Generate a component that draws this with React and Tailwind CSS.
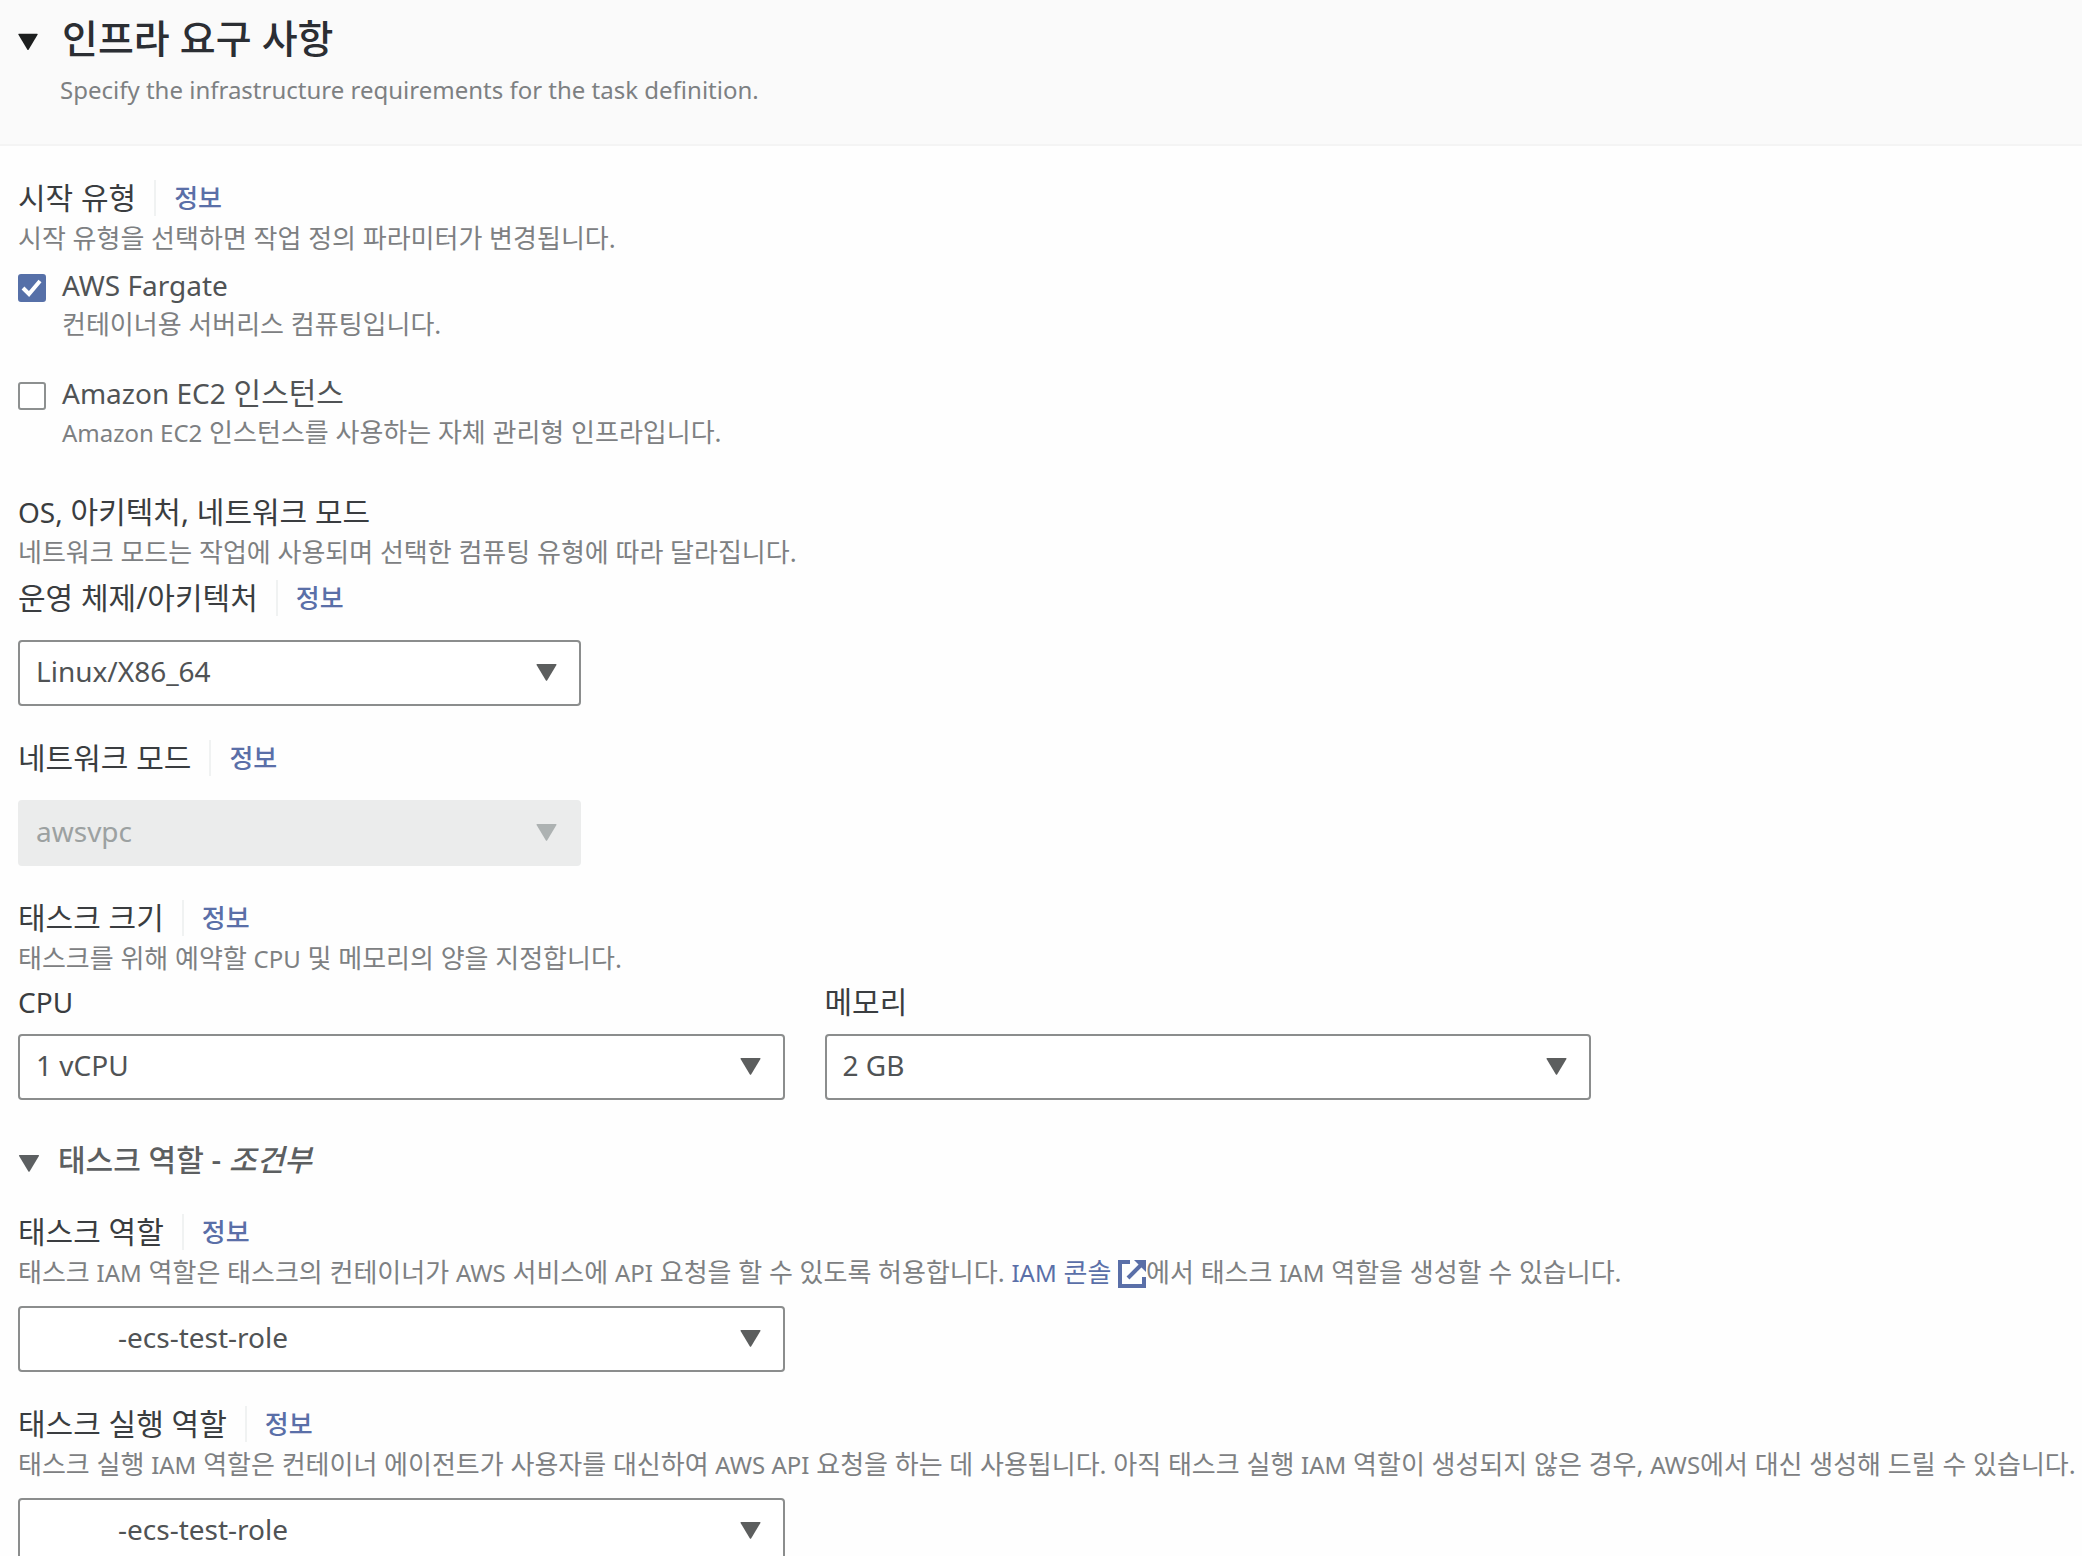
import React, { useId } from "react";

function Triangle({ className }) {
  return (
    <svg viewBox="0 0 22 18" className={className} fill="currentColor" aria-hidden="true">
      <path d="M1 0h20q1 0 .5 1L11.8 17.2q-.8 1.2-1.6 0L.5 1Q0 0 1 0Z" />
    </svg>
  );
}

function ExternalIcon() {
  return (
    <svg
      viewBox="0 0 28 28"
      className="inline-block h-7 w-7 align-[-6px]"
      fill="none"
      stroke="currentColor"
      strokeWidth="4"
      aria-hidden="true"
    >
      <path d="M12 2H2v24h24v-9" />
      <path d="M23 5 10 18" />
      <path d="M16 0h12v12Z" fill="currentColor" stroke="none" />
    </svg>
  );
}

/* Latin words inside Korean copy are set a little smaller than the Hangul. */
function En({ children }) {
  return <span className="text-[24px]">{children}</span>;
}

function EnLabel({ children }) {
  return <span className="text-[28px]">{children}</span>;
}

function Info() {
  return (
    <a href="#info" className="ml-[18px] border-l-2 border-[#f0f2f2] pl-[18px] text-[26px] font-medium leading-9 text-[#5a6fa8]">
      정보
    </a>
  );
}

function Label({ htmlFor, info, children }) {
  const Tag = htmlFor ? "label" : "h3";
  return (
    <div className="flex h-10 items-center text-[30px] leading-10 text-[#3a3d40]">
      <Tag htmlFor={htmlFor}>{children}</Tag>
      {info && <Info />}
    </div>
  );
}

function Desc({ children }) {
  return <p className="h-10 whitespace-nowrap text-[26px] leading-10 text-[#7d8082]">{children}</p>;
}

function Select({ id, value, disabled, className = "pl-4" }) {
  return (
    <div className={disabled ? "relative text-[#adb2b2]" : "relative text-[#5c5e5e]"}>
      <select
        id={id}
        disabled={disabled}
        className={
          (disabled
            ? "border-[#ebecec] bg-[#ebecec] text-[#9ca1a1] "
            : "border-[#8b8d8d] bg-white text-[#505355] ") +
          "block h-[66px] w-full appearance-none rounded-[4px] border-2 pr-14 pb-1 text-[28px] opacity-100 " +
          className
        }
      >
        <option>{value}</option>
      </select>
      <Triangle className="pointer-events-none absolute top-6 right-6 h-[17px] w-[21px]" />
    </div>
  );
}

function Check({ label, children, defaultChecked }) {
  const id = useId();
  return (
    <div className="flex gap-4">
      <div className="relative mt-2 h-7 w-7 shrink-0">
        <input
          id={id}
          type="checkbox"
          defaultChecked={defaultChecked}
          className="peer block h-7 w-7 appearance-none rounded-[3px] border-2 border-[#8d9090] bg-white checked:border-[#5670a8] checked:bg-[#5670a8]"
        />
        <svg
          viewBox="0 0 28 28"
          className="pointer-events-none absolute inset-0 hidden h-7 w-7 peer-checked:block"
          fill="none"
          stroke="#fff"
          strokeWidth="4"
          aria-hidden="true"
        >
          <path d="m5 14 6 6L22 7" />
        </svg>
      </div>
      <div>
        <label htmlFor={id} className="block h-[38px] text-[30px] leading-[38px] text-[#505355]">
          {label}
        </label>
        <Desc>{children}</Desc>
      </div>
    </div>
  );
}

export default function App() {
  return (
    <div className="h-screen overflow-hidden bg-[#fefefe] font-['Noto_Sans','Noto_Sans_CJK_KR',sans-serif]">
      <header className="border-b-2 border-[#f4f4f4] bg-[#fafafa] px-[18px] pt-3 pb-8">
        <h2>
          <button className="flex items-center gap-6 text-[39px] leading-[52px] font-medium text-[#2b2e33]">
            <Triangle className="mt-2 h-[18px] w-5 text-[#1c1e1e]" />
            인프라 요구 사항
          </button>
        </h2>
        <p className="pl-[42px] pt-1 text-[24px] leading-[44px] text-[#7d8082]">
          Specify the infrastructure requirements for the task definition.
        </p>
      </header>

      <main className="px-[18px] pt-8">
        <section>
          <Label info>시작 유형</Label>
          <Desc>시작 유형을 선택하면 작업 정의 파라미터가 변경됩니다.</Desc>
          <div className="mt-2 flex flex-col gap-[30px]">
            <Check label={<EnLabel>AWS Fargate</EnLabel>} defaultChecked>
              컨테이너용 서버리스 컴퓨팅입니다.
            </Check>
            <Check label={<><EnLabel>Amazon EC2</EnLabel> 인스턴스</>}>
              <En>Amazon EC2</En> 인스턴스를 사용하는 자체 관리형 인프라입니다.
            </Check>
          </div>
        </section>

        <section className="mt-10">
          <Label><EnLabel>OS,</EnLabel> 아키텍처, 네트워크 모드</Label>
          <Desc>네트워크 모드는 작업에 사용되며 선택한 컴퓨팅 유형에 따라 달라집니다.</Desc>
          <div className="mt-1.5 flex max-w-[563px] flex-col gap-8">
            <div className="flex flex-col gap-[22px]">
              <Label htmlFor="os" info>운영 체제/아키텍처</Label>
              <Select id="os" value="Linux/X86_64" />
            </div>
            <div className="flex flex-col gap-[22px]">
              <Label htmlFor="network" info>네트워크 모드</Label>
              <Select id="network" value="awsvpc" disabled />
            </div>
          </div>
        </section>

        <section className="mt-8">
          <Label info>태스크 크기</Label>
          <Desc>태스크를 위해 예약할 <En>CPU</En> 및 메모리의 양을 지정합니다.</Desc>
          <div className="mt-1 grid max-w-[1573px] grid-cols-2 gap-10">
            <div className="flex flex-col gap-3">
              <Label htmlFor="cpu"><EnLabel>CPU</EnLabel></Label>
              <Select id="cpu" value="1 vCPU" />
            </div>
            <div className="flex flex-col gap-3">
              <Label htmlFor="memory">메모리</Label>
              <Select id="memory" value="2 GB" />
            </div>
          </div>
        </section>

        <section className="mt-10">
          <button className="flex h-10 items-center gap-[18px] text-[30px] leading-10 text-[#5c5f61]">
            <Triangle className="mt-1.5 h-[17px] w-[22px]" />
            <span className="font-medium">태스크 역할 - <i>조건부</i></span>
          </button>
          <div className="mt-8">
            <Label htmlFor="role" info>태스크 역할</Label>
            <Desc>
              태스크 <En>IAM</En> 역할은 태스크의 컨테이너가 <En>AWS</En> 서비스에 <En>API</En> 요청을 할 수 있도록 허용합니다.{" "}
              <a href="#iam" className="text-[#5a6fa8]"><En>IAM</En> 콘솔 <ExternalIcon /></a>에서 태스크 <En>IAM</En> 역할을 생성할 수 있습니다.
            </Desc>
            <div className="mt-3.5 max-w-[767px]">
              <Select id="role" value="-ecs-test-role" className="pl-[98px]" />
            </div>
          </div>
          <div className="mt-8">
            <Label htmlFor="exec-role" info>태스크 실행 역할</Label>
            <Desc>
              태스크 실행 <En>IAM</En> 역할은 컨테이너 에이전트가 사용자를 대신하여 <En>AWS API</En> 요청을 하는 데 사용됩니다. 아직 태스크 실행 <En>IAM</En> 역할이 생성되지 않은 경우, <En>AWS</En>에서 대신 생성해 드릴 수 있습니다.
            </Desc>
            <div className="mt-3.5 max-w-[767px]">
              <Select id="exec-role" value="-ecs-test-role" className="pl-[98px]" />
            </div>
          </div>
        </section>
      </main>
    </div>
  );
}
